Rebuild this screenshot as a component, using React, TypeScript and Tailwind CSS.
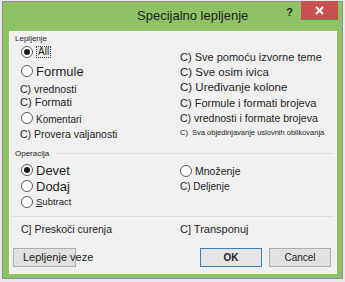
import React from "react";

const font = { fontFamily: '"Liberation Sans", Arial, sans-serif' };

function Radio({ checked = false }: { checked?: boolean }) {
  return (
    <span className="relative inline-flex h-[12px] w-[12px] shrink-0 items-center justify-center rounded-full border border-[#5a5a5a] bg-white">
      {checked && <span className="h-[6px] w-[6px] rounded-full bg-[#1a1a1a]" />}
    </span>
  );
}

export default function App() {
  return (
    <div className="h-[282px] w-[345px] overflow-hidden whitespace-nowrap bg-[#e9e9e9] text-[#1e1e1e]" style={font}>
      <div className="ml-[2px] mt-[1px] flex h-[278px] w-[341px] flex-col border border-[#8f8f8f] bg-[#8dc364]">
        {/* title bar */}
        <div className="flex h-[29px] items-start">
          <div className="flex h-[28px] flex-1 items-center pl-[134px] text-[13px] text-[#1e1e1e]">
            Specijalno lepljenje
          </div>
          <div className="mr-[8px] mt-[4px] text-[11px] font-bold leading-[12px] text-[#222]">?</div>
          <div className="-mt-px mr-[4px] flex h-[19px] w-[37px] items-center justify-center bg-[#c75050]">
            <svg width="9" height="9" viewBox="0 0 9 9">
              <path d="M1 1 L8 8 M8 1 L1 8" stroke="white" strokeWidth="2" />
            </svg>
          </div>
        </div>
        {/* panel */}
        <div className="mb-[4px] ml-[6px] mr-[5px] flex flex-1 flex-col border border-[#fafafa] bg-[#f0f0f0]">
          <div className="mt-px flex h-[12px] items-center pl-[5px] text-[8px] leading-none">Lepljenje</div>
          <div className="grid grid-cols-[170px_1fr]">
            <div className="flex flex-col pl-[10px]">
              <div className="flex h-[14px] items-center gap-[3px] pl-px">
                <Radio checked />
                <span className="border border-dotted border-[#333] px-px text-[10px] leading-[10px]">All</span>
              </div>
              <div className="flex h-[24px] items-center gap-[3px] pl-px">
                <Radio />
                <span className="text-[13px] leading-none">Formule</span>
              </div>
              <div className="flex h-[12px] items-center text-[10.5px] leading-none">C) vrednosti</div>
              <div className="flex h-[14px] items-center text-[11px] leading-none">C) Formati</div>
              <div className="flex h-[18px] items-center gap-[3px] pl-px">
                <Radio />
                <span className="mt-[4px] text-[10px] leading-none">Komentari</span>
              </div>
              <div className="flex h-[14px] items-center text-[10.5px] leading-none">C) Provera valjanosti</div>
            </div>
            <div className="flex flex-col pt-[5px]">
              <div className="flex h-[15px] items-center text-[11px] leading-none">C) Sve pomoću izvorne teme</div>
              <div className="flex h-[15px] items-center text-[11.5px] leading-none">C) Sve osim ivica</div>
              <div className="flex h-[15px] items-center text-[11.5px] leading-none">C) Uređivanje kolone</div>
              <div className="flex h-[16px] items-center text-[11px] leading-none">C) Formule i formati brojeva</div>
              <div className="flex h-[15px] items-center text-[10.5px] leading-none">C) vrednosti i formate brojeva</div>
              <div className="flex h-[14px] items-center text-[7.5px] leading-none">C)&nbsp; Sva objedinjavanje uslovnih oblikovanja</div>
            </div>
          </div>
          <div className="mt-[6px] flex h-[13px] items-center gap-[8px] pl-[5px] pr-[2px]">
            <span className="text-[8px] leading-none">Operacija</span>
            <div className="h-px flex-1 bg-[#dcdcdc]" />
          </div>
          <div className="mt-[2px] grid grid-cols-[170px_1fr]">
            <div className="flex flex-col pl-[11px]">
              <div className="flex h-[16px] items-center gap-[3px]">
                <Radio checked />
                <span className="text-[13px] leading-none">Devet</span>
              </div>
              <div className="flex h-[16px] items-center gap-[3px]">
                <Radio />
                <span className="text-[13px] leading-none">Dodaj</span>
              </div>
              <div className="flex h-[16px] items-center gap-[3px]">
                <Radio />
                <span className="text-[9.5px] leading-none">
                  <span className="underline">S</span>ubtract
                </span>
              </div>
            </div>
            <div className="flex flex-col pt-px">
              <div className="flex h-[16px] items-center gap-[3px]">
                <Radio />
                <span className="text-[10.5px] leading-none">Množenje</span>
              </div>
              <div className="flex h-[16px] items-center text-[10px] leading-none">C) Deljenje</div>
            </div>
          </div>
          <div className="mx-[2px] mt-[6px] h-px bg-[#dcdcdc]" />
          <div className="mt-[5px] grid h-[14px] grid-cols-[170px_1fr] items-center leading-none">
            <div className="pl-[11px] text-[10.5px]">C] Preskoči curenja</div>
            <div className="text-[11px]">C] Transponuj</div>
          </div>
          <div className="mt-[12px] flex h-[19px] items-stretch pl-[3px]">
            <div className="flex w-[63px] items-center overflow-visible border border-[#adadad] bg-[#e1e1e1] pl-[9px] text-[11px] leading-none">
              Lepljenje veze
            </div>
            <div className="ml-[124px] flex w-[62px] items-center justify-center border border-[#3c7fb1] bg-[#e5e5e5] text-[10px] leading-none">
              <span className="font-bold">OK</span>
            </div>
            <div className="ml-[7px] flex w-[62px] items-center justify-center border border-[#adadad] bg-[#e1e1e1] text-[10px] leading-none">
              Cancel
            </div>
          </div>
        </div>
      </div>
    </div>
  );
}
